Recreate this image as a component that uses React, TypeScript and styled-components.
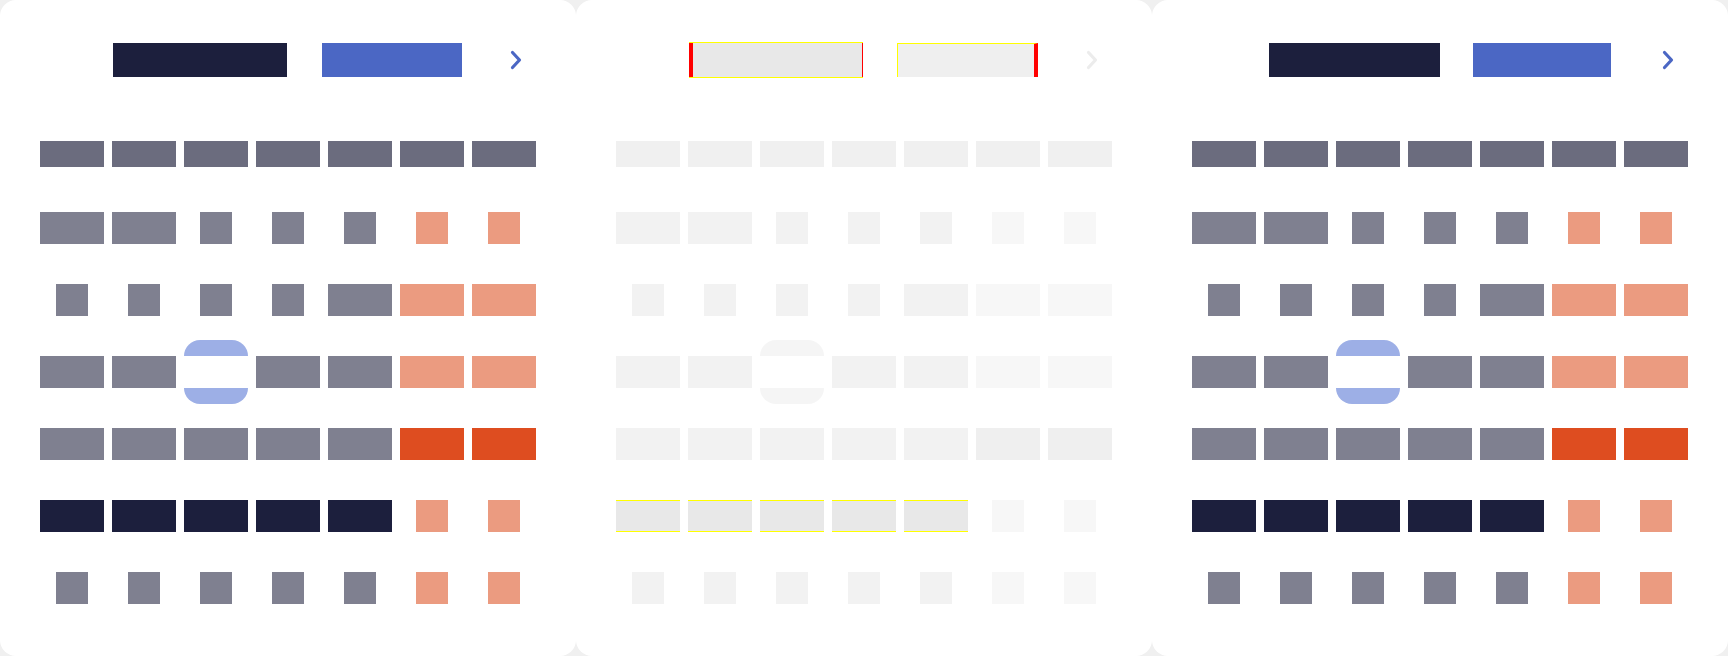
import React from 'react';
import styled, {createGlobalStyle} from 'styled-components';

type Kind = 'head' | 'gray' | 'soft' | 'hot' | 'dark' | 'today';
type Tone = 'color' | 'faded';

const palette: { [T in Tone]: { [K in Kind]: string } } = {
	color: {
		head: '#6b6c7e',
		gray: '#7f8090',
		soft: '#eb9b80',
		hot: '#de4d20',
		dark: '#1c1f3d',
		today: '#9dafe6',
	},
	faded: {
		head: '#f0f0f0',
		gray: '#f2f2f2',
		soft: '#f7f7f7',
		hot: '#efefef',
		dark: '#e8e8e8',
		today: '#f5f5f5',
	},
};

const codes: { [c: string]: Kind } = {h: 'head', g: 'gray', s: 'soft', o: 'hot', d: 'dark', t: 'today'};

const weeks = [
	'gW gW gN gN gN sN sN',
	'gN gN gN gN gW sW sW',
	'gW gW tW gW gW sW sW',
	'gW gW gW gW gW oW oW',
	'dW dW dW dW dW sN sN',
	'gN gN gN gN gN sN sN',
];

const GlobalStyle = createGlobalStyle`
	html, body {
		margin: 0;
		background: #f0f0f0;
		overflow: hidden;
		font-family: "Liberation Sans", Arial, sans-serif;
	}
`;

const Page = styled.div`
	display: flex;
	width: 1728px;
	height: 656px;
	background: #f0f0f0;
`;

const Panel = styled.div`
	width: 576px;
	height: 656px;
	flex-shrink: 0;
	box-sizing: border-box;
	padding: 43px 0 0 40px;
	background: white;
	border-radius: 16px;
`;

const Header = styled.div<{ $indent: number }>`
	display: flex;
	align-items: center;
	height: 34px;
	padding-left: ${p => p.$indent}px;
`;

const TitleBlock = styled.div<{ $width: number; $tone: Tone }>`
	box-sizing: border-box;
	width: ${p => p.$width}px;
	height: 34px;
	background: ${p => p.$tone === 'color' ? '#1c1f3d' : '#e8e8e8'};
	${p => p.$tone === 'faded' && `
		border-left: 4px solid #ff0000;
		border-right: 1px solid #ff0000;
		box-shadow: 0 -1px 0 #ffff00, 0 1px 0 #ffff00;
	`}
`;

const YearBlock = styled.div<{ $width: number; $gap: number; $tone: Tone }>`
	box-sizing: border-box;
	width: ${p => p.$width}px;
	height: 34px;
	margin-left: ${p => p.$gap}px;
	background: ${p => p.$tone === 'color' ? '#4b67c4' : '#efefef'};
	${p => p.$tone === 'faded' && `
		border-left: 1px solid #ffff00;
		border-top: 1px solid #ffff00;
		border-right: 4px solid #ff0000;
	`}
`;

const NextButton = styled.div<{ $gap: number; $tone: Tone }>`
	display: flex;
	margin-left: ${p => p.$gap}px;
	color: ${p => p.$tone === 'color' ? '#4b67c4' : '#ececec'};
`;

const Weekdays = styled.div`
	display: grid;
	grid-template-columns: repeat(7, 64px);
	column-gap: 8px;
	margin-top: 64px;
	height: 26px;
`;

const Weeks = styled.div`
	display: flex;
	flex-direction: column;
	gap: 40px;
	margin-top: 45px;
`;

const Week = styled.div`
	display: grid;
	grid-template-columns: repeat(7, 64px);
	grid-auto-rows: 32px;
	column-gap: 8px;
	justify-items: center;
	align-items: center;
`;

const DayName = styled.div<{ $tone: Tone }>`
	height: 26px;
	background: ${p => palette[p.$tone].head};
`;

const Day = styled.div<{ $kind: Kind; $tone: Tone; $narrow: boolean }>`
	box-sizing: border-box;
	width: ${p => p.$narrow ? 32 : 64}px;
	height: 32px;
	background: ${p => palette[p.$tone][p.$kind]};
	${p => p.$kind === 'dark' && p.$tone === 'faded' && `
		border-top: 1px solid #ffff00;
		border-bottom: 1px solid #ffff00;
	`}
	${p => p.$kind === 'today' && `
		height: 64px;
		margin: -16px 0;
		border-radius: 16px;
		background: linear-gradient(to bottom,
			${palette[p.$tone].today} 0 16px, #ffffff 16px 48px, ${palette[p.$tone].today} 48px);
	`}
`;

const Chevron = () => (
	<svg width="12" height="20" viewBox="0 0 12 20" fill="none">
		<path d="M2.5 2.5 L9.5 10 L2.5 17.5" stroke="currentColor" strokeWidth="3.2"
		      strokeLinecap="round" strokeLinejoin="round"/>
	</svg>
);

type HeaderLayout = { indent: number; title: number; gap: number; year: number; next: number };

const Calendar = ({tone, layout}: { tone: Tone; layout: HeaderLayout }) => {
	return (
		<Panel>
			<Header $indent={layout.indent}>
				<TitleBlock $width={layout.title} $tone={tone}/>
				<YearBlock $width={layout.year} $gap={layout.gap} $tone={tone}/>
				<NextButton $gap={layout.next} $tone={tone}>
					<Chevron/>
				</NextButton>
			</Header>
			<Weekdays>
				{[0, 1, 2, 3, 4, 5, 6].map(i => <DayName key={i} $tone={tone}/>)}
			</Weekdays>
			<Weeks>
				{weeks.map((week, r) => (
					<Week key={r}>
						{week.split(' ').map((code, c) => (
							<Day key={c} $kind={codes[code[0]]} $tone={tone} $narrow={code[1] === 'N'}/>
						))}
					</Week>
				))}
			</Weeks>
		</Panel>
	);
};

const App = () => {
	return (
		<Page>
			<GlobalStyle/>
			<Calendar tone="color" layout={{indent: 73, title: 174, gap: 35, year: 140, next: 48}}/>
			<Calendar tone="faded" layout={{indent: 73, title: 174, gap: 34, year: 141, next: 48}}/>
			<Calendar tone="color" layout={{indent: 77, title: 171, gap: 33, year: 138, next: 51}}/>
		</Page>
	);
};

export default App;
